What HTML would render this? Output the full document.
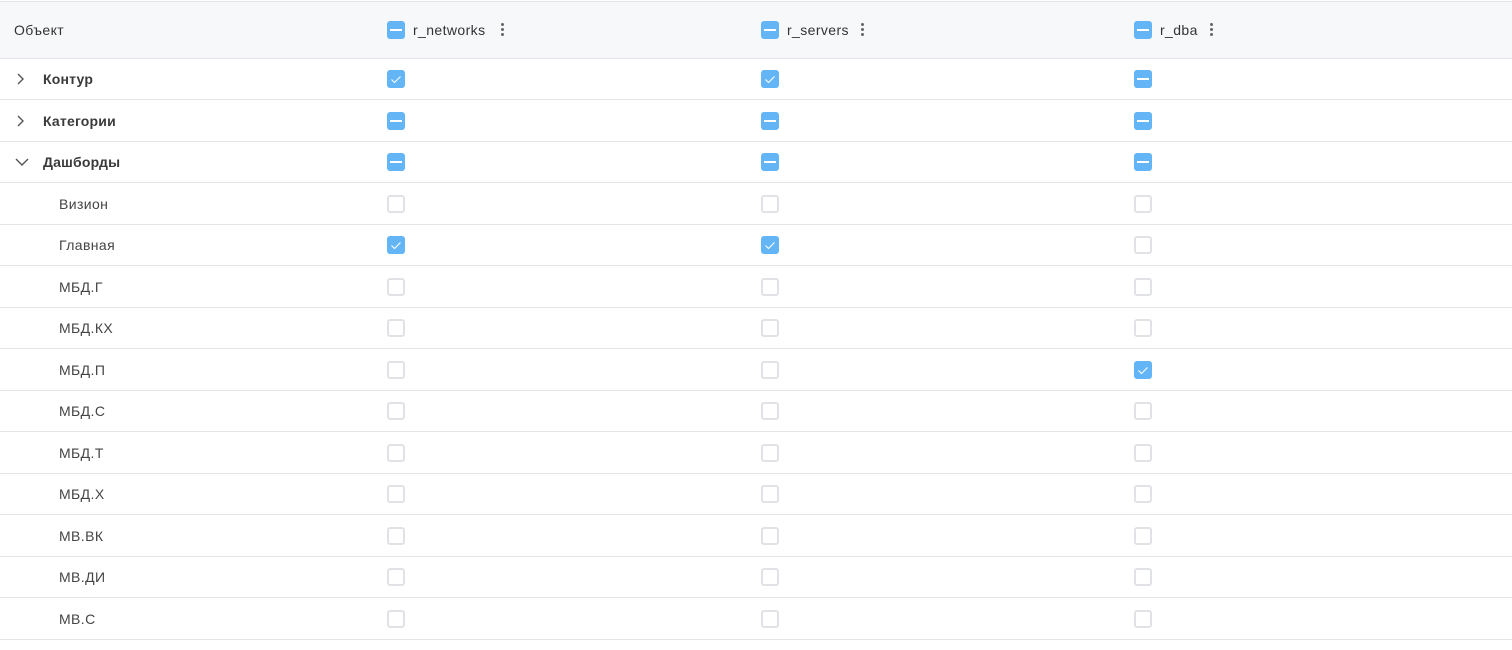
<!DOCTYPE html>
<html><head><meta charset="utf-8"><style>
*{margin:0;padding:0;box-sizing:border-box}
body{width:1512px;height:650px;background:#fff;font-family:"Liberation Sans",sans-serif;color:#333;position:relative;overflow:hidden}
.hdr{position:absolute;left:0;top:1px;width:1512px;height:58px;background:#f7f8fa;border-top:1px solid #e3e5e8;border-bottom:1px solid #e3e5e8}
.row{position:absolute;left:0;width:1512px;height:42px;border-bottom:1px solid #e3e5e8}
.t{position:absolute;font-size:14px;line-height:16px;top:50%;margin-top:-8px;letter-spacing:0.4px}
.b{font-weight:bold;color:#3a3a3a;left:43px;letter-spacing:0.2px}
.c{left:59px;color:#444}
.cb{position:absolute;width:18px;height:18px;top:50%;margin-top:-9px;border-radius:3px}
.e{border:2px solid #e0e2e5;background:#fff}
.m,.k{background:#64b5f6}
.m::after{content:"";position:absolute;left:3px;right:3px;top:8px;height:2px;background:#fff}
.k svg{position:absolute;left:0;top:0}
.x1{left:387px}.x2{left:761px}.x3{left:1134px}
.chev{position:absolute;left:15px;top:50%;margin-top:-7px}
.dots{position:absolute;top:50%;margin-top:-7px;width:4px}
.dots i{display:block;width:3px;height:3px;border-radius:50%;background:#666;margin-bottom:2px}
</style></head><body>
<div class="hdr">
<span class="t" style="left:14px;color:#333">Объект</span>
<span class="cb m x1"></span><span class="t" style="left:413px">r_networks</span><span class="dots" style="left:501px"><i></i><i></i><i></i></span>
<span class="cb m x2"></span><span class="t" style="left:787px">r_servers</span><span class="dots" style="left:861px"><i></i><i></i><i></i></span>
<span class="cb m x3"></span><span class="t" style="left:1160px">r_dba</span><span class="dots" style="left:1210px"><i></i><i></i><i></i></span>
</div>

<div class="row" style="top:58px"><svg class="chev" width="12" height="14"><path d="M3 2l5 5-5 5" fill="none" stroke="#555" stroke-width="1.4"/></svg><span class="t b">Контур</span>
<span class="cb k x1"><svg width="18" height="18"><path d="M4.5 9.5l3 3 6-6" fill="none" stroke="#fff" stroke-width="1.1"/></svg></span>
<span class="cb k x2"><svg width="18" height="18"><path d="M4.5 9.5l3 3 6-6" fill="none" stroke="#fff" stroke-width="1.1"/></svg></span>
<span class="cb m x3"></span></div>

<div class="row" style="top:100px"><svg class="chev" width="12" height="14"><path d="M3 2l5 5-5 5" fill="none" stroke="#555" stroke-width="1.4"/></svg><span class="t b">Категории</span>
<span class="cb m x1"></span><span class="cb m x2"></span><span class="cb m x3"></span></div>

<div class="row" style="top:141px"><svg class="chev" width="14" height="14"><path d="M1 4l6 6 6-6" fill="none" stroke="#555" stroke-width="1.4"/></svg><span class="t b">Дашборды</span>
<span class="cb m x1"></span><span class="cb m x2"></span><span class="cb m x3"></span></div>

<div class="row" style="top:183px"><span class="t c">Визион</span><span class="cb e x1"></span><span class="cb e x2"></span><span class="cb e x3"></span></div>

<div class="row" style="top:224px"><span class="t c">Главная</span>
<span class="cb k x1"><svg width="18" height="18"><path d="M4.5 9.5l3 3 6-6" fill="none" stroke="#fff" stroke-width="1.1"/></svg></span>
<span class="cb k x2"><svg width="18" height="18"><path d="M4.5 9.5l3 3 6-6" fill="none" stroke="#fff" stroke-width="1.1"/></svg></span>
<span class="cb e x3"></span></div>

<div class="row" style="top:266px"><span class="t c">МБД.Г</span><span class="cb e x1"></span><span class="cb e x2"></span><span class="cb e x3"></span></div>
<div class="row" style="top:307px"><span class="t c">МБД.КХ</span><span class="cb e x1"></span><span class="cb e x2"></span><span class="cb e x3"></span></div>
<div class="row" style="top:349px"><span class="t c">МБД.П</span><span class="cb e x1"></span><span class="cb e x2"></span>
<span class="cb k x3"><svg width="18" height="18"><path d="M4.5 9.5l3 3 6-6" fill="none" stroke="#fff" stroke-width="1.1"/></svg></span></div>
<div class="row" style="top:390px"><span class="t c">МБД.С</span><span class="cb e x1"></span><span class="cb e x2"></span><span class="cb e x3"></span></div>
<div class="row" style="top:432px"><span class="t c">МБД.Т</span><span class="cb e x1"></span><span class="cb e x2"></span><span class="cb e x3"></span></div>
<div class="row" style="top:473px"><span class="t c">МБД.Х</span><span class="cb e x1"></span><span class="cb e x2"></span><span class="cb e x3"></span></div>
<div class="row" style="top:515px"><span class="t c">МВ.ВК</span><span class="cb e x1"></span><span class="cb e x2"></span><span class="cb e x3"></span></div>
<div class="row" style="top:556px"><span class="t c">МВ.ДИ</span><span class="cb e x1"></span><span class="cb e x2"></span><span class="cb e x3"></span></div>
<div class="row" style="top:598px"><span class="t c">МВ.С</span><span class="cb e x1"></span><span class="cb e x2"></span><span class="cb e x3"></span></div>
</body></html>
